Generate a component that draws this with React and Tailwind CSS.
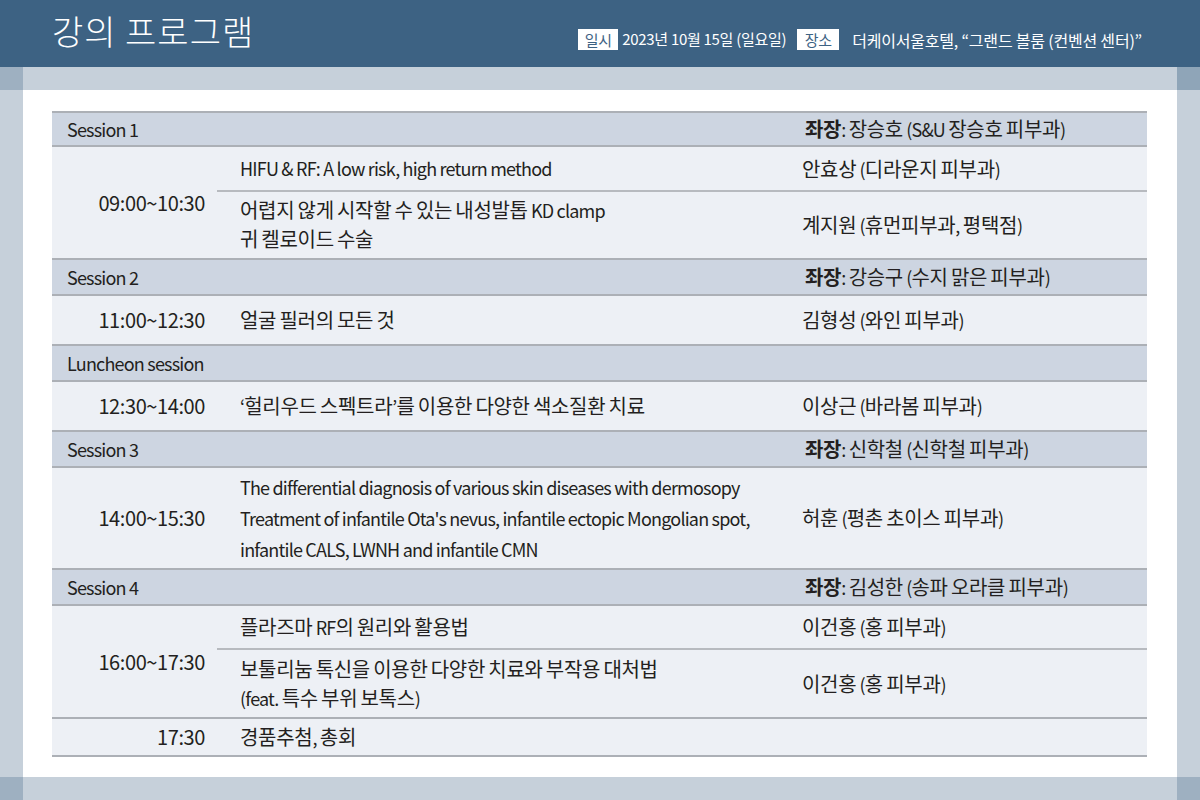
import React from 'react';

const sessions = [
    {
        title: "Session 1",
        chair: "장승호 (S&U 장승호 피부과)",
        time: "09:00~10:30",
        talks: [
            { lines: ["HIFU & RF: A low risk, high return method"], speaker: "안효상 (디라운지 피부과)", h: "h-[43px]" },
            { lines: ["어렵지 않게 시작할 수 있는 내성발톱 KD clamp", "귀 켈로이드 수술"], speaker: "계지원 (휴먼피부과, 평택점)", h: "h-[68px]" },
        ],
    },
    {
        title: "Session 2",
        chair: "강승구 (수지 맑은 피부과)",
        time: "11:00~12:30",
        talks: [
            { lines: ["얼굴 필러의 모든 것"], speaker: "김형성 (와인 피부과)", h: "h-[48px]" },
        ],
    },
    {
        title: "Luncheon session",
        time: "12:30~14:00",
        talks: [
            { lines: ["‘헐리우드 스펙트라’를 이용한 다양한 색소질환 치료"], speaker: "이상근 (바라봄 피부과)", h: "h-[48px]" },
        ],
    },
    {
        title: "Session 3",
        chair: "신학철 (신학철 피부과)",
        time: "14:00~15:30",
        talks: [
            {
                lines: [
                    "The differential diagnosis of various skin diseases with dermosopy",
                    "Treatment of infantile Ota's nevus, infantile ectopic Mongolian spot,",
                    "infantile CALS, LWNH and infantile CMN",
                ],
                speaker: "허훈 (평촌 초이스 피부과)",
                h: "h-[100px]",
                loose: true,
            },
        ],
    },
    {
        title: "Session 4",
        chair: "김성한 (송파 오라클 피부과)",
        time: "16:00~17:30",
        talks: [
            { lines: ["플라즈마 RF의 원리와 활용법"], speaker: "이건홍 (홍 피부과)", h: "h-[42px]" },
            { lines: ["보툴리눔 톡신을 이용한 다양한 치료와 부작용 대처법", "(feat. 특수 부위 보톡스)"], speaker: "이건홍 (홍 피부과)", h: "h-[69px]" },
        ],
    },
];

// hangul runs keep their size, latin runs get squeezed a bit (the print font is condensed)
const Txt = ({ text }) =>
    text.split(/([\uAC00-\uD7A3\u3131-\u318E]+)/).map((part, i) =>
        part ? (
            <span
                key={i}
                className={/[\uAC00-\uD7A3]/.test(part) ? "text-[20px] tracking-[-0.3px]" : "text-[18px] tracking-[-0.8px]"}
            >
                {part}
            </span>
        ) : null
    );

const SessionHeader = ({ title, chair, first }) => (
    <div className={`${first ? "h-[34px]" : "h-[36px]"} bg-[#cdd5e1] border-b-2 border-[#acb0b6] flex items-center whitespace-nowrap`}>
        <div className="w-[750px] pl-[15px]"><Txt text={title} /></div>
        {chair && (
            <div className="pl-[3px]">
                <span className="font-bold"><Txt text="좌장" /></span>
                <Txt text={": " + chair} />
            </div>
        )}
    </div>
);

const SessionBody = ({ time, talks }) => (
    <div className="flex border-b-2 border-[#acb0b6] bg-[#edf0f5]">
        <div className="w-[165px] shrink-0 flex items-center justify-end pr-[12px] text-[20px] tracking-[-0.4px]">{time}</div>
        <div className="flex-1 flex flex-col">
            {talks.map((t, i) => (
                <div
                    key={i}
                    className={`${t.h} grid grid-cols-[585px_1fr] items-center whitespace-nowrap ${i > 0 ? "border-t-2 border-[#b7babf]" : ""}`}
                >
                    <div className={`pl-[23px] ${t.loose ? "leading-[30px]" : "leading-[28px]"}`}>
                        {t.lines.map((l, j) => (
                            <div key={j}><Txt text={l} /></div>
                        ))}
                    </div>
                    <div><Txt text={t.speaker} /></div>
                </div>
            ))}
        </div>
    </div>
);

export default function App() {
    return (
        <div className="w-[1200px] h-[800px] flex flex-col bg-[#c6d0da] font-['Noto_Sans_CJK_KR',sans-serif] text-[#231f20]">
            <header className="h-[67px] shrink-0 bg-[#3d6283] flex items-center justify-between pl-[52px] pr-[58px] text-white">
                <h1 className="text-[34px] font-light tracking-[1px] -mt-[6px]">강의 프로그램</h1>
                <div className="flex items-center text-[15px] mt-[12px] tracking-[-0.3px] whitespace-nowrap">
                    <span className="bg-white text-[#3d6283] w-[40px] text-center h-[21px] leading-[21px] mr-[4px]">일시</span>
                    <span>2023년 10월 15일 (일요일)</span>
                    <span className="bg-white text-[#3d6283] w-[42px] text-center h-[21px] leading-[21px] ml-[11px] mr-[13px]">장소</span>
                    <span className="text-[16px] tracking-[-0.2px]">더케이서울호텔, “그랜드 볼룸 (컨벤션 센터)”</span>
                </div>
            </header>

            <div className="flex-1 grid grid-cols-[23px_1fr_23px] grid-rows-[23px_1fr_23px]">
                <div className="bg-[#9eb0c1]" />
                <div />
                <div className="bg-[#8fa5b8]" />
                <div />
                <main className="bg-white pl-[29px] pr-[30px] pt-[21px]">
                    <div className="border-t-2 border-[#acb0b6]">
                        {sessions.map((s, i) => (
                            <section key={s.title}>
                                <SessionHeader title={s.title} chair={s.chair} first={i === 0} />
                                <SessionBody time={s.time} talks={s.talks} />
                            </section>
                        ))}
                        <div className="h-[38px] flex items-center border-b-2 border-[#acb0b6] bg-[#edf0f5]">
                            <div className="w-[165px] shrink-0 text-right pr-[12px] text-[20px] tracking-[-0.4px]">17:30</div>
                            <div className="pl-[23px]"><Txt text="경품추첨, 총회" /></div>
                        </div>
                    </div>
                </main>
                <div />
                <div className="bg-[#9eb0c1]" />
                <div />
                <div className="bg-[#9eb0c1]" />
            </div>
        </div>
    );
}
